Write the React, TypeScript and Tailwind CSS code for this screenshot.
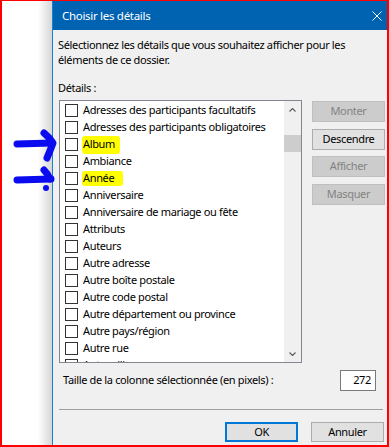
import React from "react";

const items: { label: string; hl?: "a" | "b" }[] = [
  { label: "Adresses des participants facultatifs" },
  { label: "Adresses des participants obligatoires" },
  { label: "Album", hl: "a" },
  { label: "Ambiance" },
  { label: "Année", hl: "b" },
  { label: "Anniversaire" },
  { label: "Anniversaire de mariage ou fête" },
  { label: "Attributs" },
  { label: "Auteurs" },
  { label: "Autre adresse" },
  { label: "Autre boîte postale" },
  { label: "Autre code postal" },
  { label: "Autre département ou province" },
  { label: "Autre pays/région" },
  { label: "Autre rue" },
  { label: "Autre ville" },
];

function Row({ label, hl }: { label: string; hl?: "a" | "b" }) {
  return (
    <div className="flex h-[17px] flex-none items-center pl-[5px]">
      <div className="h-[13px] w-[13px] flex-none border border-[#333333] bg-white" />
      {hl === "a" ? (
        <span className="ml-[4px] flex h-[18px] items-center rounded-[3px] bg-[#ffff00] pl-[1px] pr-[5px] whitespace-nowrap">
          {label}
        </span>
      ) : hl === "b" ? (
        <span className="ml-[4px] flex h-[15px] items-center rounded-[3px] bg-[#ffff00] pl-[1px] pr-[9px] whitespace-nowrap">
          {label}
        </span>
      ) : (
        <span className="ml-[5px] whitespace-nowrap">{label}</span>
      )}
    </div>
  );
}

export default function App() {
  return (
    <div
      className="relative flex h-[447px] w-[389px] overflow-hidden border-x-2 border-t border-b-2 border-[#ff0000] bg-white text-[11px] tracking-[-0.35px] text-black"
      style={{ fontFamily: '"Noto Sans", "Open Sans", sans-serif' }}
    >
      {/* left desktop area with window shadow */}
      <div className="flex w-[50px] flex-none justify-end">
        <div className="w-[14px] bg-linear-to-r from-white to-[#d6d6d6]" />
      </div>

      {/* dialog */}
      <div className="flex flex-1 flex-col border-l border-[#1a7fd4]">
        <div className="flex h-[29px] flex-none items-center justify-between bg-[#0063b1] pl-[9px] pr-[5px] text-white">
          <span className="text-[11.5px] tracking-[-0.3px]">Choisir les détails</span>
          <svg width="10" height="10" viewBox="0 0 10 10" className="flex-none">
            <path d="M0.5 0.5 L9.5 9.5 M9.5 0.5 L0.5 9.5" stroke="white" strokeWidth="1" fill="none" />
          </svg>
        </div>

        <div className="flex flex-1 flex-col bg-[#f0f0f0] pl-[5px]">
          <p className="mt-[7px] leading-[15px] whitespace-nowrap">
            Sélectionnez les détails que vous souhaitez afficher pour les
            <br />
            éléments de ce dossier.
          </p>
          <p className="mt-[13px] leading-[15px]">Détails :</p>

          <div className="mt-[5px] flex">
            <div className="ml-[1px] flex h-[263px] w-[243px] flex-none border border-[#828790] bg-white">
              <div className="flex flex-1 flex-col overflow-hidden pt-[1px]">
                {items.map((it) => (
                  <Row key={it.label} label={it.label} hl={it.hl} />
                ))}
              </div>
              <div className="flex w-[17px] flex-none flex-col bg-[#f0f0f0]">
                <div className="flex h-[17px] items-center justify-center">
                  <svg width="7" height="4" viewBox="0 0 7 4">
                    <path d="M0.5 3.5 L3.5 0.5 L6.5 3.5" stroke="#606060" strokeWidth="1.2" fill="none" />
                  </svg>
                </div>
                <div className="mt-[17px] h-[17px] bg-[#cdcdcd]" />
                <div className="flex-1" />
                <div className="flex h-[17px] items-center justify-center">
                  <svg width="7" height="4" viewBox="0 0 7 4">
                    <path d="M0.5 0.5 L3.5 3.5 L6.5 0.5" stroke="#606060" strokeWidth="1.2" fill="none" />
                  </svg>
                </div>
              </div>
            </div>

            <div className="ml-[10px] flex w-[73px] flex-none flex-col">
              <button className="mt-[1px] h-[21px] border border-[#bfbfbf] bg-[#cccccc] text-[#838383]">Monter</button>
              <button className="mt-[7px] h-[21px] border border-[#adadad] bg-[#e1e1e1] text-black">Descendre</button>
              <button className="mt-[6px] h-[21px] border border-[#bfbfbf] bg-[#cccccc] text-[#838383]">Afficher</button>
              <button className="mt-[7px] h-[21px] border border-[#bfbfbf] bg-[#cccccc] text-[#838383]">Masquer</button>
            </div>
          </div>

          <div className="mt-[7px] flex items-center pl-[5px] pr-[11px]">
            <span className="flex-1 whitespace-nowrap">Taille de la colonne sélectionnée (en pixels) :</span>
            <div className="flex h-[21px] w-[36px] items-center justify-end border border-[#7a7a7a] bg-white pr-[4px]">
              272
            </div>
          </div>

          <div className="ml-[1px] mr-[4px] mt-[18px] h-px bg-[#a0a0a0]" />

          <div className="mt-[12px] flex justify-end gap-[13px] pr-[3px]">
            <button className="h-[20px] w-[73px] border-2 border-[#0078d7] bg-[#e1e1e1] text-black">OK</button>
            <button className="h-[20px] w-[73px] border border-[#adadad] bg-[#e1e1e1] text-black">Annuler</button>
          </div>
        </div>
      </div>

      {/* hand-drawn annotation arrows */}
      <svg
        className="pointer-events-none absolute -left-[2px] -top-[1px]"
        width="389"
        height="447"
        viewBox="0 0 389 447"
      >
        <g stroke="#0b0bf0" strokeWidth="7" strokeLinecap="round" strokeLinejoin="round" fill="none">
          <path d="M17 144 L52 143" />
          <path d="M44 133 Q50 138 53 143 Q50 151 47 158" />
          <path d="M17 180 L51 179" />
          <path d="M44 170 Q48 174 50 179" />
        </g>
        <circle cx="46" cy="188" r="3" fill="#0b0bf0" />
      </svg>
    </div>
  );
}
